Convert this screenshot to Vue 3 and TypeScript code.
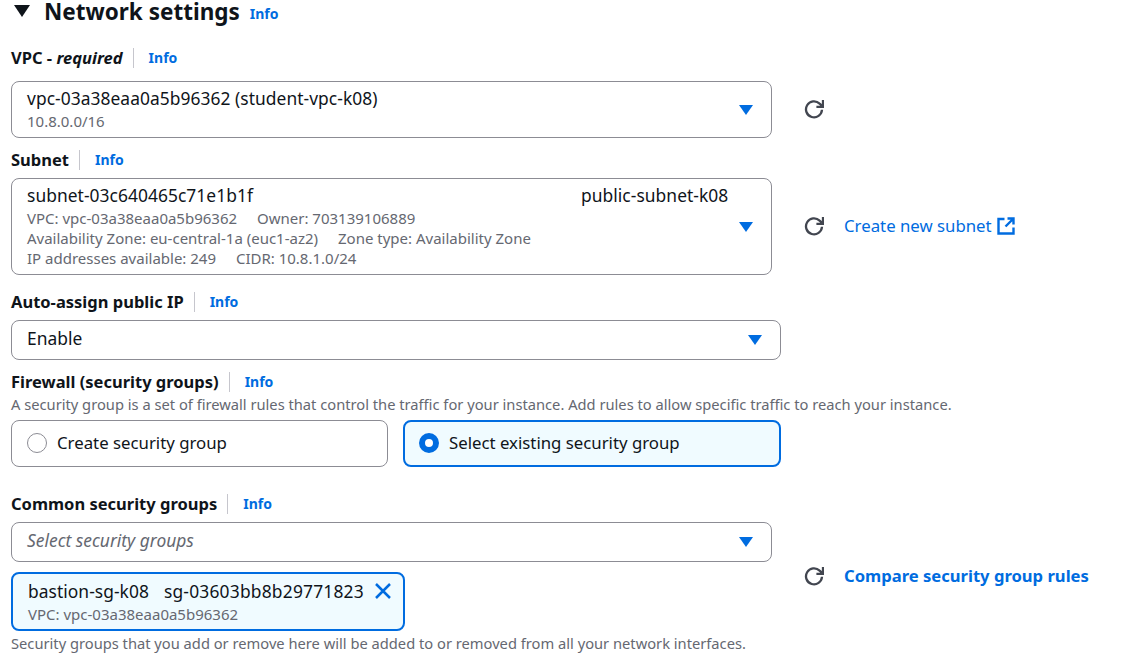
<template>
  <div class="page">
    <div class="heading">
      <svg class="caret" viewBox="0 0 16 12" width="16" height="12"><path d="M0 0h16L8 12z" fill="#0f141a" /></svg>
      <h2>Network settings</h2>
      <a class="info head-info">Info</a>
    </div>

    <div class="label vpc-label">
      <span>VPC - <i>required</i></span><a class="info">Info</a>
    </div>
    <div class="row">
      <div class="select vpc-box">
        <div class="value">vpc-03a38eaa0a5b96362 (student-vpc-k08)</div>
        <div class="sub vpc-sub">10.8.0.0/16</div>
        <svg class="arrow" viewBox="0 0 14 10" width="14" height="10"><path d="M0 0h14L7 10z" /></svg>
      </div>
      <div class="side vpc-side">
        <svg class="refresh" viewBox="0 0 20 20" width="20" height="20"><path d="M18 10.8a8 8 0 1 1-2.4-6.2L18.4 7.2M19 1v6.8h-6.6" /></svg>
      </div>
    </div>

    <div class="label subnet-label">
      <span>Subnet</span><a class="info">Info</a>
    </div>
    <div class="row">
      <div class="select subnet-box">
        <div class="value subnet-value">
          <span class="subnet-id">subnet-03c640465c71e1b1f</span>
          <span>public-subnet-k08</span>
        </div>
        <div class="sub">VPC: vpc-03a38eaa0a5b96362 <span class="gap">Owner: 703139106889</span></div>
        <div class="sub">Availability Zone: eu-central-1a (euc1-az2) <span class="gap">Zone type: Availability Zone</span></div>
        <div class="sub">IP addresses available: 249 <span class="gap">CIDR: 10.8.1.0/24</span></div>
        <svg class="arrow" viewBox="0 0 14 10" width="14" height="10"><path d="M0 0h14L7 10z" /></svg>
      </div>
      <div class="side subnet-side">
        <svg class="refresh" viewBox="0 0 20 20" width="20" height="20"><path d="M18 10.8a8 8 0 1 1-2.4-6.2L18.4 7.2M19 1v6.8h-6.6" /></svg>
        <a class="link">Create new subnet</a>
        <svg class="external" viewBox="0 0 18 18" width="18" height="18"><path d="M7.5 2H1.5v14.5h15V10.5M10.5 1.5h6v6M16.5 1.5 8.5 9.5" /></svg>
      </div>
    </div>

    <div class="label ip-label">
      <span>Auto-assign public IP</span><a class="info">Info</a>
    </div>
    <div class="select wide ip-box">
      <div class="value">Enable</div>
      <svg class="arrow" viewBox="0 0 14 10" width="14" height="10"><path d="M0 0h14L7 10z" /></svg>
    </div>

    <div class="label fw-label">
      <span>Firewall (security groups)</span><a class="info">Info</a>
    </div>
    <div class="desc fw-desc">A security group is a set of firewall rules that control the traffic for your instance. Add rules to allow specific traffic to reach your instance.</div>
    <div class="tiles">
      <div class="tile">
        <span class="radio"></span>Create security group
      </div>
      <div class="tile selected">
        <span class="radio on"></span>Select existing security group
      </div>
    </div>

    <div class="label common-label">
      <span>Common security groups</span><a class="info">Info</a>
    </div>
    <div class="row common-row">
      <div class="common-col">
        <div class="select sg-box">
          <div class="placeholder">Select security groups</div>
          <svg class="arrow" viewBox="0 0 14 10" width="14" height="10"><path d="M0 0h14L7 10z" /></svg>
        </div>
        <div class="token">
          <div class="token-text">
            <div class="value"><span class="token-name">bastion-sg-k08</span><span class="token-id">sg-03603bb8b29771823</span></div>
            <div class="sub token-sub">VPC: vpc-03a38eaa0a5b96362</div>
          </div>
          <svg class="close" viewBox="0 0 18 18" width="18" height="18"><path d="M2 2l14 14M16 2 2 16" /></svg>
        </div>
      </div>
      <div class="side common-side">
        <svg class="refresh" viewBox="0 0 20 20" width="20" height="20"><path d="M18 10.8a8 8 0 1 1-2.4-6.2L18.4 7.2M19 1v6.8h-6.6" /></svg>
        <a class="link strong">Compare security group rules</a>
      </div>
    </div>
    <div class="desc foot">Security groups that you add or remove here will be added to or removed from all your network interfaces.</div>
  </div>
</template>

<script setup lang="ts">
</script>

<style scoped>
.page {
  width: 1132px;
  height: 666px;
  overflow: hidden;
  box-sizing: border-box;
  padding-left: 11px;
  font-family: "Noto Sans", "Open Sans", sans-serif;
  font-size: 16.8px;
  line-height: 20px;
  color: #0f141a;
  background: #fff;
}
.heading {
  display: flex;
  align-items: center;
  height: 22px;
  padding-left: 3px;
}
.heading h2 {
  margin: 1px 0 0 14px;
  font-size: 22.5px;
  font-weight: 700;
  line-height: 22px;
}
.head-info {
  margin-left: 14px;
  margin-top: 6px;
  border: 0 !important;
  padding: 0 !important;
}
.label {
  display: flex;
  align-items: center;
  height: 20px;
  font-size: 16.5px;
  font-weight: 700;
}
.label i {
  font-weight: 700;
}
.info {
  margin-left: 10px;
  padding-left: 15px;
  border-left: 1px solid #c6c6cd;
  font-size: 14px;
  font-weight: 700;
  color: #006ce0;
}
.vpc-label { margin-top: 26px; }
.subnet-label { margin-top: 12px; }
.ip-label { margin-top: 17px; }
.fw-label { margin-top: 12px; }
.common-label { margin-top: 27px; }
.row {
  display: flex;
}
.select {
  position: relative;
  box-sizing: border-box;
  width: 761px;
  margin-top: 13px;
  padding: 6px 15px;
  border: 1px solid #8c8c94;
  border-radius: 8px;
}
.wide { width: 770px; }
.vpc-box { height: 57px; }
.subnet-box { margin-top: 8px; height: 97px; }
.ip-box { margin-top: 8px; height: 40px; padding-top: 7px; }
.sg-box { margin-top: 8px; height: 40px; padding-top: 7px; }
.value {
  font-size: 17.4px;
  letter-spacing: 0.05px;
}
.subnet-value {
  display: flex;
  margin-bottom: 3px;
}
.subnet-id { width: 554px; }
.token-id { letter-spacing: 0.2px; }
.sub {
  font-size: 15px;
  line-height: 20px;
  color: #656871;
}
.vpc-sub { margin-top: 3px; }
.token-sub { margin-top: 3px; }
.gap { margin-left: 16px; }
.arrow {
  position: absolute;
  right: 18px;
  top: 50%;
  margin-top: -5px;
  fill: #006ce0;
}
.side {
  display: flex;
  align-items: center;
  margin-left: 32px;
}
.vpc-side { margin-top: 12px; }
.subnet-side { margin-top: 7px; }
.refresh {
  fill: none;
  stroke: #424650;
  stroke-width: 2.3;
}
.link {
  margin-left: 20px;
  color: #006ce0;
}
.strong {
  font-size: 16.6px;
  font-weight: 700;
}
.external {
  margin-left: 5px;
  fill: none;
  stroke: #006ce0;
  stroke-width: 2.4;
}
.desc {
  font-size: 14.7px;
  line-height: 20px;
  color: #656871;
}
.fw-desc { margin-top: 2px; }
.tiles {
  display: flex;
  gap: 15px;
  margin-top: 6px;
}
.tile {
  display: flex;
  align-items: center;
  box-sizing: border-box;
  width: 377px;
  height: 47px;
  padding-left: 16px;
  padding-bottom: 1px;
  border: 1px solid #8c8c94;
  border-radius: 8px;
}
.selected {
  width: 378px;
  border: 2px solid #006ce0;
  background: #f0fbff;
  padding-left: 15px;
}
.radio {
  box-sizing: border-box;
  width: 20px;
  height: 20px;
  margin-right: 10px;
  margin-left: -1px;
  border: 1px solid #8c8c94;
  border-radius: 50%;
  background: #fff;
}
.on {
  border: 6px solid #006ce0;
}
.common-col {
  display: flex;
  flex-direction: column;
}
.token {
  display: flex;
  justify-content: space-between;
  box-sizing: border-box;
  width: 394px;
  height: 59px;
  margin-top: 10px;
  padding: 7px 11px 0 15px;
  border: 2px solid #006ce0;
  border-radius: 8px;
  background: #f0fbff;
}
.token-name { margin-right: 15px; }
.close {
  margin-top: 1px;
  fill: none;
  stroke: #006ce0;
  stroke-width: 2.5;
}
.placeholder {
  font-size: 17.4px;
  font-style: italic;
  color: #656871;
}
.common-side {
  align-self: flex-start;
  margin-top: 48px;
  height: 28px;
}
.foot { margin-top: 2px; }
</style>

<style>
html, body { margin: 0; background: #fff; }
</style>
